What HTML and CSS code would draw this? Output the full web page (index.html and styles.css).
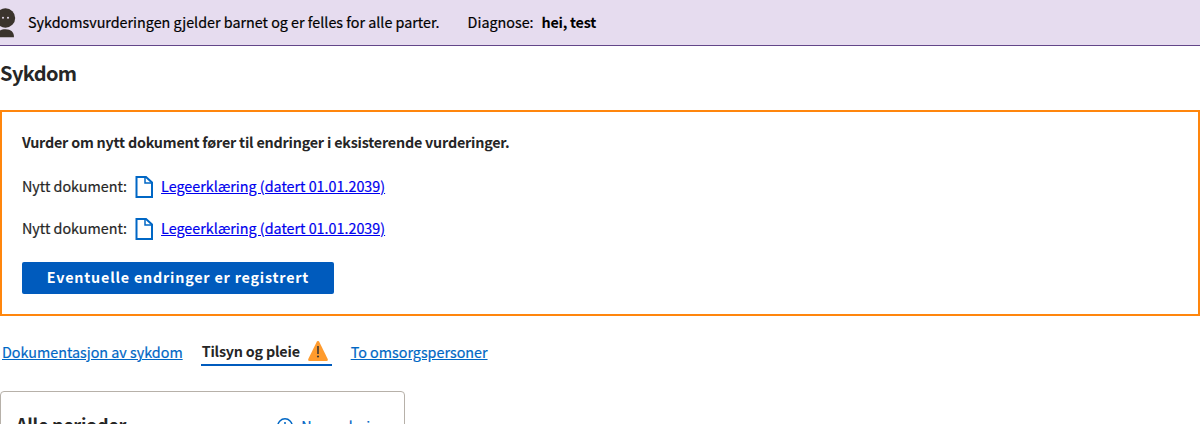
FILE: index.html
```html
<!DOCTYPE html>
<html lang="nb">
<head>
<meta charset="utf-8">
<title>Sykdom</title>
<link rel="stylesheet" href="styles.css">
</head>
<body>
<header class="banner">
  <svg class="banner-icon" width="16" height="30" viewBox="0 0 16 30"><circle cx="5.5" cy="10" r="9.7"/><path d="M-3 29.3C-3 24 0 21.2 5.5 21.2S14 24 14 29.3z"/><circle class="eye" cx="3" cy="9.8" r="1"/><circle class="eye" cx="8" cy="9.8" r="1"/></svg>
  <span class="banner-text">Sykdomsvurderingen gjelder barnet og er felles for alle parter.</span>
  <span class="banner-label">Diagnose:</span>
  <span class="banner-value">hei, test</span>
</header>
<h1 class="title">Sykdom</h1>
<section class="alert">
  <p class="alert-title">Vurder om nytt dokument fører til endringer i eksisterende vurderinger.</p>
  <div class="document">
    <span class="document-label">Nytt dokument:</span>
    <svg class="document-icon" width="18" height="22" viewBox="0 0 18 22"><path d="M1.500 1H11L17 6.500V21H1.500z"/><path class="fold" d="M10 1V7H17"/></svg>
    <a class="document-link" href="#">Legeerklæring (datert 01.01.2039)</a>
  </div>
  <div class="document">
    <span class="document-label">Nytt dokument:</span>
    <svg class="document-icon" width="18" height="22" viewBox="0 0 18 22"><path d="M1.500 1H11L17 6.500V21H1.500z"/><path class="fold" d="M10 1V7H17"/></svg>
    <a class="document-link" href="#">Legeerklæring (datert 01.01.2039)</a>
  </div>
  <button class="button">Eventuelle endringer er registrert</button>
</section>
<nav class="tabs">
  <a class="tab tab-first" href="#">Dokumentasjon av sykdom</a>
  <span class="tab-active"><span class="tab-active-text">Tilsyn og pleie</span>
    <svg width="20" height="20" viewBox="0 0 20 20"><path fill="#ff9b2d" d="M8.900.6Q10 -.7 11.100.6L19.700 18Q20.300 20 18.500 20H1.500Q-.3 20 .3 18z"/><path fill="#3e3832" d="M9.200 5h1.600v8H9.200z"/><circle fill="#3e3832" cx="10" cy="15.500" r="1.100"/></svg>
  </span>
  <a class="tab tab-last" href="#">To omsorgspersoner</a>
</nav>
<section class="card">
  <h2 class="card-title">Alle perioder</h2>
  <a class="card-action" href="#">
    <svg width="16" height="16" viewBox="0 0 16 16"><circle cx="8" cy="8" r="7.200"/><path d="M8 4v8M4 8h8"/></svg>
    <span>Ny vurdering</span>
  </a>
</section>
</body>
</html>
```
FILE: styles.css
```css
body {
  margin: 0;
  height: 424px;
  overflow: hidden;
  background: #fff;
  color: #262626;
  font: 14.33px/24px "Noto Sans CJK SC", "Noto Sans", sans-serif;
  white-space: nowrap;
}
.banner {
  box-sizing: border-box;
  display: flex;
  align-items: center;
  height: 46px;
  padding-bottom: 1px;
  border-bottom: 1px solid #634689;
  background: #e6dcef;
  color: #000;
}
.banner-icon { margin: 1px 12px 0 0; fill: #3b342d; }
.banner-icon .eye { fill: #e6dcef; }
.banner-text, .banner-label, .document-label, .document-link, .tab, .card-action {
  -webkit-text-stroke: 0.2px currentColor;
}
.banner-label { margin-left: 28px; }
.banner-value { margin-left: 8px; font-weight: 700; letter-spacing: -0.25px; }
.title { margin: 13px 0 23px; font-size: 20px; line-height: 28px; letter-spacing: -0.6px; }
.alert {
  box-sizing: border-box;
  height: 206px;
  padding: 18px 20px;
  border: 2px solid #ff860d;
}
.alert-title { margin: 0 0 20px; font-weight: 700; letter-spacing: -0.21px; }
.document { display: flex; align-items: center; height: 24px; margin-bottom: 18px; }
.document-icon { margin: 2px 8px 0; fill: none; stroke: #0067c5; stroke-width: 2; }
.document-icon .fold { stroke-width: 1.5; }
.document-link { color: #00e; text-underline-offset: 1px; }
.button {
  display: block;
  width: 312px;
  height: 32px;
  margin-top: 22px;
  padding: 0 0 2px;
  border: 0;
  border-radius: 2px;
  background: #005bbd;
  color: #fff;
  font: inherit;
  font-weight: 700;
  letter-spacing: 0.79px;
}
.tabs { display: flex; height: 25px; margin-top: 24px; }
.tab { color: #0067c5; text-underline-offset: 1px; }
.tab-first { margin: 0 18.500px 0 2px; }
.tab-last { margin-left: 18.500px; }
.tab-active {
  box-sizing: border-box;
  display: flex;
  gap: 8px;
  width: 131px;
  height: 26px;
  padding-left: 0.5px;
  border-bottom: 2px solid #005bbd;
  font-weight: 700;
  letter-spacing: -0.2px;
}
.tab-active-text { line-height: 22px; }
.tab-active svg { flex: none; margin-top: 1px; }
.card {
  box-sizing: border-box;
  display: flex;
  align-items: flex-start;
  justify-content: space-between;
  width: 405px;
  height: 80px;
  margin-top: 26px;
  padding: 18px 17px 0 15px;
  border: 1px solid #b7b1a9;
  border-radius: 4px;
}
.card-title { margin: 0; font-size: 18px; line-height: 28px; letter-spacing: -0.3px; }
.card-action {
  display: flex;
  align-items: center;
  gap: 8px;
  margin-top: 4px;
  color: #0067c5;
  text-decoration: none;
}
.card-action svg { fill: none; stroke: #0067c5; stroke-width: 1.500; }
```
